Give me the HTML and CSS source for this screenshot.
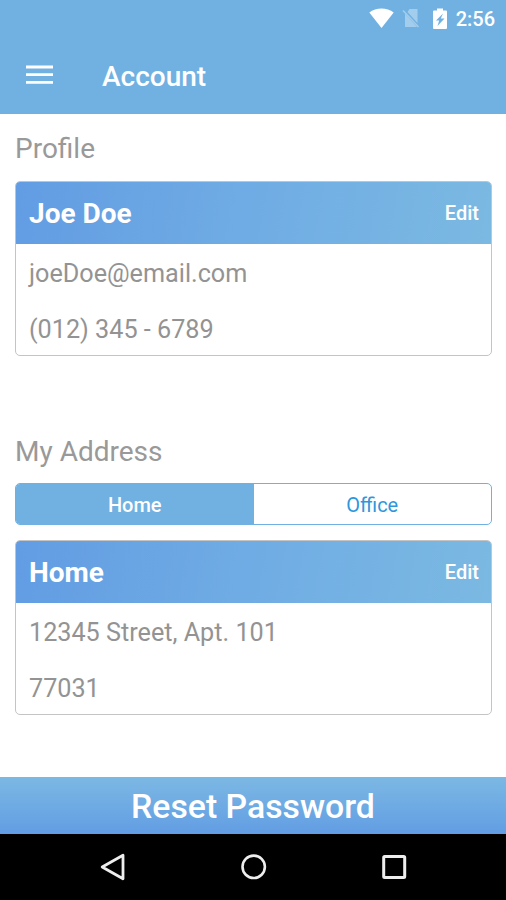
FILE: index.html
```html
<!DOCTYPE html>
<html lang="en">
<head>
<meta charset="utf-8">
<title>Account</title>
<link rel="stylesheet" href="styles.css">
</head>
<body>
<div class="screen">
  <div class="status">
    <svg class="wifi" width="25" height="21" viewBox="0 0 25 21"><path d="M.3 4.500C7-.8 18-.8 24.700 4.500L12.500 20z" fill="#fff"/></svg>
    <svg class="sim" width="19" height="22" viewBox="0 0 19 22"><path d="M7.500 2H15.500V16L5.500 5zM3 6.500L15 20H3z" fill="#a3cdec"/><path d="M1 3.500L16.500 20" stroke="#a3cdec" stroke-width="1.500"/></svg>
    <svg class="battery" width="14" height="21" viewBox="0 0 14 21"><path d="M1 2.500H4V.5H10V2.500H13Q14 2.500 14 3.500V20Q14 21 13 21H1Q0 21 0 20V3.500Q0 2.500 1 2.500z" fill="#fff"/><path d="M10 5.500L3 12.500H6.200L4.500 18L11.500 10.500H7.800z" fill="#70b1e2"/></svg>
    <span class="time">2:56</span>
  </div>
  <header class="bar">
    <svg class="menu" width="27" height="20" viewBox="0 0 27 20"><path d="M0 2H27M0 9.700H27M0 17.400H27" stroke="#fff" stroke-width="2.800"/></svg>
    <h1 class="title">Account</h1>
  </header>
  <main class="content">
    <h2 class="heading profile">Profile</h2>
    <section class="card">
      <div class="card-head"><span class="name">Joe Doe</span><span class="edit">Edit</span></div>
      <p class="line email">joeDoe@email.com</p>
      <p class="line phone">(012) 345 - 6789</p>
    </section>
    <h2 class="heading address">My Address</h2>
    <div class="tabs"><span class="tab active">Home</span><span class="tab office">Office</span></div>
    <section class="card">
      <div class="card-head"><span class="name">Home</span><span class="edit">Edit</span></div>
      <p class="line street">12345 Street, Apt. 101</p>
      <p class="line zip">77031</p>
    </section>
  </main>
  <div class="reset"><span class="reset-text">Reset Password</span></div>
  <nav class="nav">
    <svg width="28" height="30" viewBox="0 0 28 30"><path d="M3.200 15L24 3.200V26.800z" fill="none" stroke="#eee" stroke-width="2.800" stroke-linejoin="round"/></svg>
    <svg width="28" height="30" viewBox="0 0 28 30"><circle cx="13.700" cy="14.800" r="11.200" fill="none" stroke="#eee" stroke-width="2.600"/></svg>
    <svg width="28" height="30" viewBox="0 0 28 30"><rect x="3.700" y="4.500" width="21" height="21" rx="1" fill="none" stroke="#eee" stroke-width="3"/></svg>
  </nav>
</div>
</body>
</html>
```
FILE: styles.css
```css
* { box-sizing: border-box; }
body { margin: 0; background: #fff; font-family: Roboto, sans-serif; }
h1, h2, p { margin: 0; font-weight: 400; }
svg { display: block; flex: none; }
.screen { width: 506px; height: 900px; display: flex; flex-direction: column; overflow: hidden; }
.status { height: 38px; background: #70b1e2; display: flex; align-items: center; justify-content: flex-end; padding-right: 11px; color: #fff; flex: none; }
.wifi { margin-top: -2px; }
.sim { margin-left: 8px; margin-top: -2px; }
.battery { margin-left: 12px; margin-top: -2px; }
.time { margin-left: 9px; font-size: 20px; font-weight: 500; line-height: 38px; }
.bar { height: 76px; flex: none; background: #70b1e2; display: flex; align-items: center; padding-left: 26px; color: #fff; }
.menu { margin-top: -3px; }
.title { margin-left: 49px; padding-top: 2px; font-size: 28px; font-weight: 500; line-height: 74px; }
.content { height: 663px; flex: none; padding: 15px 14px 0 15px; }
.heading { font-size: 28px; line-height: 40px; color: #999; }
.profile { margin-bottom: 12px; }
.address { margin: 76px 0 11px; }
.card { height: 175px; border: 1px solid #c4c4c4; border-radius: 5px; overflow: hidden; color: #939393; }
.card-head { height: 62px; display: flex; align-items: center; justify-content: space-between; padding: 0 12px 0 13px; background: linear-gradient(100deg, #629ce3, #70ace4 50%, #7bb9e2); color: #fff; }
.name { font-size: 28px; font-weight: 700; }
.edit { font-size: 20px; font-weight: 500; }
.line { font-size: 25.2px; line-height: 56px; padding: 2px 0 0 13px; height: 56px; }
.tabs { height: 42px; display: flex; border: 1px solid #70b1e2; border-radius: 5px; overflow: hidden; margin-bottom: 15px; }
.tab { flex: 1; text-align: center; font-size: 20px; font-weight: 500; line-height: 42px; color: #3096dc; }
.active { background: #70b1e2; color: #fff; }
.office { font-weight: 400; }
.reset { height: 57px; flex: none; background: linear-gradient(#7cb8e3, #629de3); color: #fff; text-align: center; line-height: 59px; font-size: 33.8px; font-weight: 500; }
.nav { height: 66px; flex: none; background: #000; display: flex; align-items: center; justify-content: space-between; padding: 0 98px 0 99px; }
```
